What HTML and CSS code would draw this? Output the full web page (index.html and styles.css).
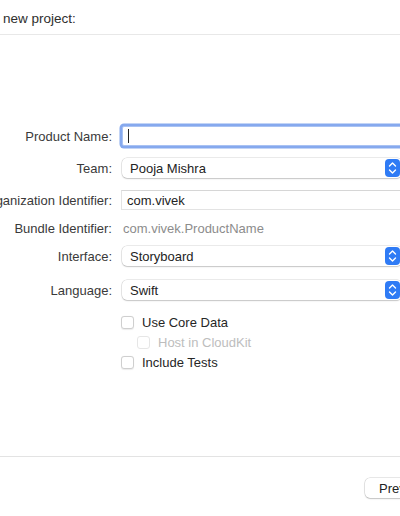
FILE: index.html
```html
<!DOCTYPE html>
<html>
<head>
<meta charset="utf-8">
<link rel="stylesheet" href="styles.css">
</head>
<body>
<div class="window">
  <header class="header">
    <span class="title">new project:</span>
  </header>
  <main class="main">
    <div class="form">
      <div class="row row-tall">
        <div class="label"><span>Product Name:</span></div>
        <div class="field textfield focused"><span class="caret"></span></div>
      </div>
      <div class="row row-tall">
        <div class="label"><span>Team:</span></div>
        <div class="field popup"><span class="value">Pooja Mishra</span><span class="stepper"><svg viewBox="0 0 15 18" width="15" height="18"><path d="M4.5 7 L7.5 4 L10.5 7" fill="none" stroke="#fff" stroke-width="1.4" stroke-linecap="round" stroke-linejoin="round"/><path d="M4.5 11 L7.5 14 L10.5 11" fill="none" stroke="#fff" stroke-width="1.4" stroke-linecap="round" stroke-linejoin="round"/></svg></span></div>
      </div>
      <div class="row row-tall">
        <div class="label"><span>Organization Identifier:</span></div>
        <div class="field textfield"><span class="value">com.vivek</span></div>
      </div>
      <div class="row row-short">
        <div class="label"><span>Bundle Identifier:</span></div>
        <div class="field plain"><span class="value muted">com.vivek.ProductName</span></div>
      </div>
      <div class="row row-tall">
        <div class="label"><span>Interface:</span></div>
        <div class="field popup"><span class="value">Storyboard</span><span class="stepper"><svg viewBox="0 0 15 18" width="15" height="18"><path d="M4.5 7 L7.5 4 L10.5 7" fill="none" stroke="#fff" stroke-width="1.4" stroke-linecap="round" stroke-linejoin="round"/><path d="M4.5 11 L7.5 14 L10.5 11" fill="none" stroke="#fff" stroke-width="1.4" stroke-linecap="round" stroke-linejoin="round"/></svg></span></div>
      </div>
      <div class="row row-tall row-lang">
        <div class="label"><span>Language:</span></div>
        <div class="field popup"><span class="value">Swift</span><span class="stepper"><svg viewBox="0 0 15 18" width="15" height="18"><path d="M4.5 7 L7.5 4 L10.5 7" fill="none" stroke="#fff" stroke-width="1.4" stroke-linecap="round" stroke-linejoin="round"/><path d="M4.5 11 L7.5 14 L10.5 11" fill="none" stroke="#fff" stroke-width="1.4" stroke-linecap="round" stroke-linejoin="round"/></svg></span></div>
      </div>
    </div>
    <div class="checks">
      <label class="check"><span class="box"></span><span>Use Core Data</span></label>
      <label class="check nested disabled"><span class="box"></span><span>Host in CloudKit</span></label>
      <label class="check"><span class="box"></span><span>Include Tests</span></label>
    </div>
  </main>
  <footer class="footer">
    <button class="btn">Previous</button>
  </footer>
</div>
</body>
</html>
```
FILE: styles.css
```css
html, body {
  margin: 0;
  padding: 0;
  background: #ffffff;
}
body {
  width: 400px;
  height: 516px;
  overflow: hidden;
  font-family: "Liberation Sans", Arial, sans-serif;
  font-size: 13px;
  color: #262626;
}
.window {
  display: flex;
  flex-direction: column;
  height: 516px;
  width: 400px;
}
.header {
  height: 34px;
  border-bottom: 1px solid #e8e8e8;
  display: flex;
  align-items: center;
  padding-left: 3px;
  flex: none;
}
.title {
  font-size: 13.5px;
  color: #2e2e2e;
  margin-top: 2px;
}
.main {
  flex: 1;
  padding-top: 89px;
  box-sizing: border-box;
}
.form {
  display: flex;
  flex-direction: column;
  gap: 8px;
}
.row {
  display: flex;
  align-items: center;
}
.row-tall { height: 24px; }
.row-short { height: 16px; }
.row-lang { margin-top: 2px; }
.label {
  width: 112px;
  flex: none;
  display: flex;
  justify-content: flex-end;
  white-space: nowrap;
  color: #3a3a3a;
  margin-right: 9px;
}
.field {
  flex: none;
  box-sizing: border-box;
  display: flex;
  align-items: center;
  white-space: nowrap;
}
.textfield {
  width: 300px;
  height: 20px;
  background: #fff;
  border: 1px solid #e3e3e3;
  border-top-color: #d6d6d6;
  padding-left: 5px;
}
.textfield.focused {
  border: 1px solid #a9c2f3;
  border-radius: 2px;
  box-shadow: 0 0 0 2.5px #86a9ee;
  width: 300px;
  margin-left: 1px;
}
.caret {
  width: 1px;
  height: 14px;
  background: #222;
}
.popup {
  width: 280px;
  height: 20px;
  background: #fff;
  border-radius: 5px;
  box-shadow: 0 0 0 0.5px rgba(0,0,0,0.16), 0 1px 1.5px rgba(0,0,0,0.16);
  padding-left: 8px;
  padding-right: 2px;
  justify-content: space-between;
  margin-left: 1px;
}
.stepper {
  width: 15px;
  height: 18px;
  border-radius: 4px;
  background: #2f7bf5;
  display: flex;
}
.plain {
  padding-left: 2px;
}
.value { color: #232323; }
.muted { color: #8c8c8c; }
.checks {
  margin-top: 10px;
  padding-left: 121px;
  display: flex;
  flex-direction: column;
}
.check {
  height: 20px;
  display: flex;
  align-items: center;
  gap: 8px;
  color: #262626;
}
.box {
  width: 13px;
  height: 13px;
  box-sizing: border-box;
  border: 1px solid #cfcfcf;
  border-radius: 3px;
  background: #fff;
  box-shadow: 0 0.5px 1px rgba(0,0,0,0.08);
}
.nested { padding-left: 16px; }
.disabled { color: #bdbdbd; }
.disabled .box { border-color: #e6e6e6; box-shadow: none; }
.footer {
  flex: none;
  height: 38px;
  border-top: 1px solid #e3e3e3;
  padding-top: 21px;
  padding-left: 365px;
  box-sizing: content-box;
  display: flex;
  align-items: flex-start;
}
.btn {
  font-family: inherit;
  font-size: 13px;
  color: #222;
  height: 20px;
  padding: 0 14px;
  background: #fff;
  border: none;
  border-radius: 5px;
  box-shadow: 0 0 0 0.5px rgba(0,0,0,0.18), 0 1px 1.5px rgba(0,0,0,0.16);
  white-space: nowrap;
  flex: none;
}
```
